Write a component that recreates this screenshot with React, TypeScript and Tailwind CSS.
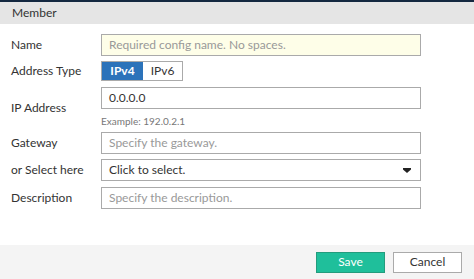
import React from "react";

const Row: React.FC<{ label: string; children: React.ReactNode; className?: string }> = ({
	label,
	children,
	className = "",
}) => (
	<div className={`flex items-center ${className}`}>
		<label className="w-[90px] shrink-0 text-[12px] text-[#333]">{label}</label>
		{children}
	</div>
);

const TextBox: React.FC<{ placeholder?: string; value?: string; bg?: string }> = ({
	placeholder,
	value,
	bg = "bg-white",
}) => (
	<div
		className={`flex h-[22px] w-[320px] items-center border border-[#aaa] px-[7px] text-[12px] ${bg} ${
			value ? "text-[#333]" : "text-[#999]"
		}`}
	>
		{value ?? placeholder}
	</div>
);

const App: React.FC = () => {
	return (
		<div className="flex h-[279px] w-[474px] flex-col bg-white font-['Lato',sans-serif]">
			<div className="h-[2px] bg-[#142840]" />
			<div className="flex h-[22px] items-center bg-[#e5e5e5] px-[12px] text-[12px] text-[#333]">
				Member
			</div>
			<div className="flex flex-1 flex-col px-[11px] pt-[10px]">
				<Row label="Name">
					<TextBox placeholder="Required config name. No spaces." bg="bg-[#fefee8]" />
				</Row>
				<Row label="Address Type" className="mt-[5px]">
					<div className="flex h-[20px] border border-[#aaa] text-[12px]">
						<button className="w-[41px] bg-[#2c73ba] font-bold text-white">IPv4</button>
						<button className="w-[39px] bg-white text-[#333]">IPv6</button>
					</div>
				</Row>
				<Row label="IP Address" className="mt-[6px]">
					<div className="flex flex-col">
						<TextBox value="0.0.0.0" />
						<span className="mt-[5px] text-[10px] text-[#777]">Example: 192.0.2.1</span>
					</div>
				</Row>
				<Row label="Gateway" className="mt-[3px]">
					<TextBox placeholder="Specify the gateway." />
				</Row>
				<Row label="or Select here" className="mt-[5px]">
					<div className="flex h-[22px] w-[320px] items-center justify-between border border-[#aaa] bg-white px-[7px] text-[12px] text-[#333]">
						<span>Click to select.</span>
						<svg width="8" height="5" viewBox="0 0 8 5" className="mr-[2px]">
							<path d="M0 0H8V1.5L4 5L0 1.5Z" fill="#222" />
						</svg>
					</div>
				</Row>
				<Row label="Description" className="mt-[6px]">
					<TextBox placeholder="Specify the description." />
				</Row>
			</div>
			<div className="flex h-[34px] items-center justify-end gap-[8px] bg-[#f4f4f4] pr-[12px]">
				<button className="h-[21px] w-[69px] border border-[#239c7d] bg-[#1fbf9b] text-[12px] text-white">
					Save
				</button>
				<button className="h-[21px] w-[69px] border border-[#aaa] bg-white text-[12px] text-[#333]">
					Cancel
				</button>
			</div>
		</div>
	);
};

export default App;
